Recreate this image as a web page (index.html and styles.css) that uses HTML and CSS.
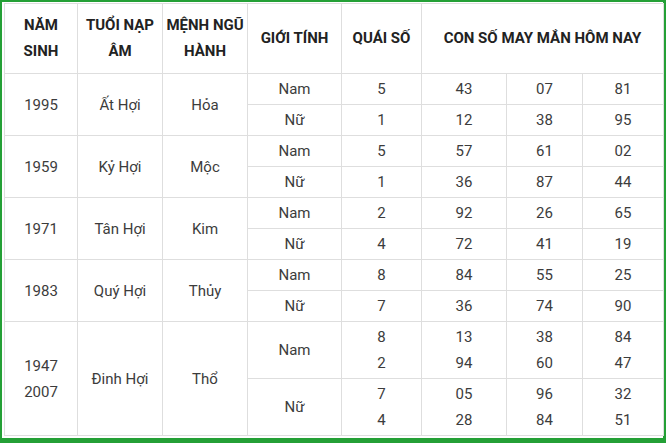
FILE: index.html
```html
<!DOCTYPE html>
<html lang="vi">
<head>
<meta charset="utf-8">
<link rel="stylesheet" href="styles.css">
</head>
<body>
<div class="frame">
<table class="lucky">
<colgroup>
<col class="c1"><col class="c2"><col class="c3"><col class="c4"><col class="c5"><col class="c6"><col class="c7"><col class="c8">
</colgroup>
<thead>
<tr>
<th>NĂM<br>SINH</th>
<th>TUỔI NẠP<br>ÂM</th>
<th>MỆNH NGŨ<br>HÀNH</th>
<th>GIỚI TÍNH</th>
<th>QUÁI SỐ</th>
<th colspan="3">CON SỐ MAY MẮN HÔM NAY</th>
</tr>
</thead>
<tbody>
<tr><td rowspan="2">1995</td><td rowspan="2">Ất Hợi</td><td rowspan="2">Hỏa</td><td>Nam</td><td>5</td><td>43</td><td>07</td><td>81</td></tr>
<tr><td>Nữ</td><td>1</td><td>12</td><td>38</td><td>95</td></tr>
<tr><td rowspan="2">1959</td><td rowspan="2">Kỷ Hợi</td><td rowspan="2">Mộc</td><td>Nam</td><td>5</td><td>57</td><td>61</td><td>02</td></tr>
<tr><td>Nữ</td><td>1</td><td>36</td><td>87</td><td>44</td></tr>
<tr><td rowspan="2">1971</td><td rowspan="2">Tân Hợi</td><td rowspan="2">Kim</td><td>Nam</td><td>2</td><td>92</td><td>26</td><td>65</td></tr>
<tr><td>Nữ</td><td>4</td><td>72</td><td>41</td><td>19</td></tr>
<tr><td rowspan="2">1983</td><td rowspan="2">Quý Hợi</td><td rowspan="2">Thủy</td><td>Nam</td><td>8</td><td>84</td><td>55</td><td>25</td></tr>
<tr><td>Nữ</td><td>7</td><td>36</td><td>74</td><td>90</td></tr>
<tr><td rowspan="2">1947<br>2007</td><td rowspan="2">Đinh Hợi</td><td rowspan="2">Thổ</td><td>Nam</td><td>8<br>2</td><td>13<br>94</td><td>38<br>60</td><td>84<br>47</td></tr>
<tr><td>Nữ</td><td>7<br>4</td><td>05<br>28</td><td>96<br>84</td><td>32<br>51</td></tr>
</tbody>
</table>
</div>
</body>
</html>
```
FILE: styles.css
```css
html, body {
  margin: 0;
  padding: 0;
  background: #ffffff;
}
.frame {
  box-sizing: border-box;
  width: 666px;
  height: 443px;
  border-style: solid;
  border-color: #24a036;
  border-width: 2px 3px 5px 2px;
  padding: 1px 1px 2px 2px;
  background: #ffffff;
}
.lucky {
  width: 659px;
  border-collapse: collapse;
  table-layout: fixed;
  font-family: Roboto, "Liberation Sans", sans-serif;
  font-size: 15px;
  line-height: 26px;
  color: #3c3c3c;
}
.c1 { width: 73px; }
.c2 { width: 85px; }
.c3 { width: 85px; }
.c4 { width: 94px; }
.c5 { width: 80px; }
.c6 { width: 85px; }
.c7 { width: 76px; }
.c8 { width: 81px; }
.lucky th,
.lucky td {
  border: 1px solid #dedede;
  text-align: center;
  vertical-align: middle;
  padding: 2px 2px;
}
.lucky th {
  font-weight: 700;
  color: #222222;
  padding: 8px 2px 9px;
  height: 52px;
}
.lucky td {
  height: 26px;
}
```
